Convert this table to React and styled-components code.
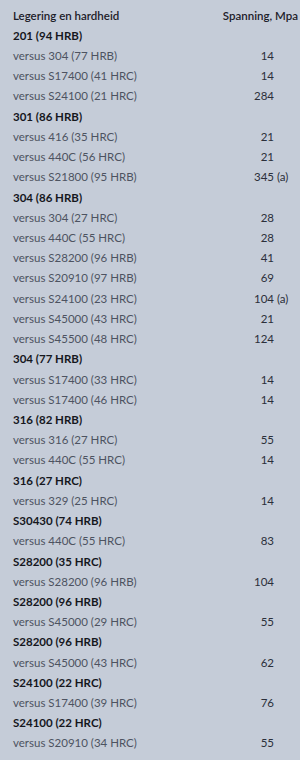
import React from "react";
import styled, { createGlobalStyle } from "styled-components";

const Global = createGlobalStyle`
  html, body { margin: 0; padding: 0; background: #c5ccd8; }
`;

const Panel = styled.div`
  width: 300px;
  height: 760px;
  box-sizing: border-box;
  background: #c5ccd8;
  padding: 5px 0 0 13px;
  font-family: Lato, "Open Sans", sans-serif;
  font-size: 11.5px;
  display: grid;
  grid-template-columns: 1fr 40px 26px;
  grid-auto-rows: 20.22px;
  align-content: start;
`;

const Cell = styled.div`
  display: flex;
  align-items: center;
  white-space: nowrap;
  color: ${(p) => (p.$strong ? "#15171d" : "#4d5361")};
  font-weight: ${(p) => (p.$strong ? 700 : 400)};
`;

const Label = styled(Cell)`
  grid-column: ${(p) => (p.$full ? "1 / 4" : "1")};
`;

const Value = styled(Cell)`
  justify-content: flex-end;
  color: #2b2f3a;
`;

const Note = styled(Cell)`
  padding-left: 3px;
  color: #2b2f3a;
`;

const HeadLeft = styled(Cell)`
  color: #1d2029;
  font-weight: 600;
`;

const HeadRight = styled(Cell)`
  grid-column: 2 / 4;
  justify-content: flex-end;
  padding-right: 2px;
  color: #1d2029;
  font-weight: 600;
`;

const rows = [
  ["g", "201 (94 HRB)"],
  ["v", "versus 304 (77 HRB)", "14"],
  ["v", "versus S17400 (41 HRC)", "14"],
  ["v", "versus S24100 (21 HRC)", "284"],
  ["g", "301 (86 HRB)"],
  ["v", "versus 416 (35 HRC)", "21"],
  ["v", "versus 440C (56 HRC)", "21"],
  ["v", "versus S21800 (95 HRB)", "345", "(a)"],
  ["g", "304 (86 HRB)"],
  ["v", "versus 304 (27 HRC)", "28"],
  ["v", "versus 440C (55 HRC)", "28"],
  ["v", "versus S28200 (96 HRB)", "41"],
  ["v", "versus S20910 (97 HRB)", "69"],
  ["v", "versus S24100 (23 HRC)", "104", "(a)"],
  ["v", "versus S45000 (43 HRC)", "21"],
  ["v", "versus S45500 (48 HRC)", "124"],
  ["g", "304 (77 HRB)"],
  ["v", "versus S17400 (33 HRC)", "14"],
  ["v", "versus S17400 (46 HRC)", "14"],
  ["g", "316 (82 HRB)"],
  ["v", "versus 316 (27 HRC)", "55"],
  ["v", "versus 440C (55 HRC)", "14"],
  ["g", "316 (27 HRC)"],
  ["v", "versus 329 (25 HRC)", "14"],
  ["g", "S30430 (74 HRB)"],
  ["v", "versus 440C (55 HRC)", "83"],
  ["g", "S28200 (35 HRC)"],
  ["v", "versus S28200 (96 HRB)", "104"],
  ["g", "S28200 (96 HRB)"],
  ["v", "versus S45000 (29 HRC)", "55"],
  ["g", "S28200 (96 HRB)"],
  ["v", "versus S45000 (43 HRC)", "62"],
  ["g", "S24100 (22 HRC)"],
  ["v", "versus S17400 (39 HRC)", "76"],
  ["g", "S24100 (22 HRC)"],
  ["v", "versus S20910 (34 HRC)", "55"],
];

export default function App() {
  return (
    <>
      <Global />
      <Panel>
        <HeadLeft>Legering en hardheid</HeadLeft>
        <HeadRight>Spanning, Mpa</HeadRight>
        {rows.map(([kind, label, value, note], i) =>
          kind === "g" ? (
            <Label key={i} $strong $full>
              {label}
            </Label>
          ) : (
            <React.Fragment key={i}>
              <Label>{label}</Label>
              <Value>{value}</Value>
              <Note>{note || ""}</Note>
            </React.Fragment>
          )
        )}
      </Panel>
    </>
  );
}
